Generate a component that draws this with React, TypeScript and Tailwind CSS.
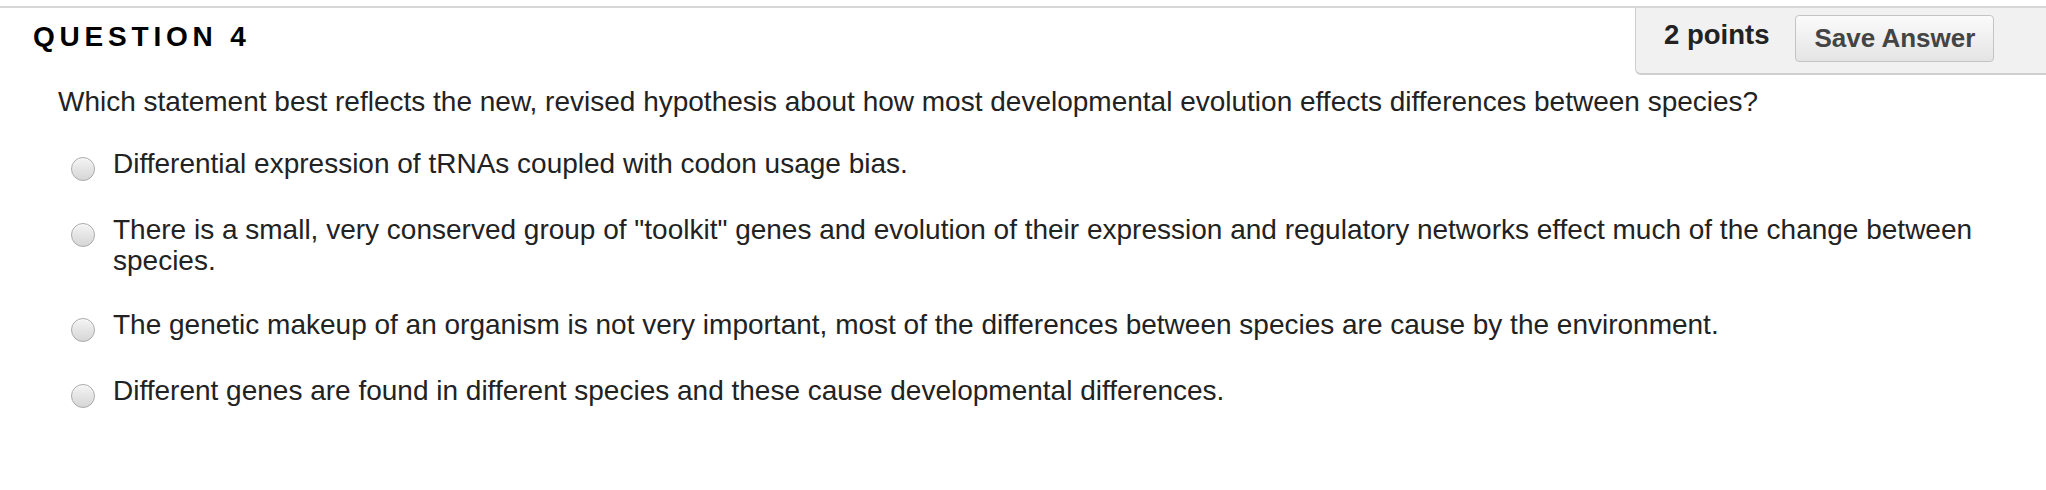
import React from "react";

const options = [
  "Differential expression of tRNAs coupled with codon usage bias.",
  'There is a small, very conserved group of "toolkit" genes and evolution of their expression and regulatory networks effect much of the change between species.',
  "The genetic makeup of an organism is not very important, most of the differences between species are cause by the environment.",
  "Different genes are found in different species and these cause developmental differences.",
];

function Radio() {
  return (
    <span className="mt-[9px] block h-[24px] w-[24px] shrink-0 rounded-full border border-[#a9a9a9] bg-gradient-to-b from-[#f4f4f4] to-[#d6d6d6] shadow-[inset_0_1px_1px_rgba(255,255,255,0.8)]" />
  );
}

export default function App() {
  return (
    <div
      className="h-[490px] w-full overflow-hidden bg-white pt-[6px] text-[#222]"
      style={{ fontFamily: '"Liberation Sans", Arial, sans-serif' }}
    >
      <div className="border-t-2 border-[#d6d6d6]">
        <div className="flex items-start">
          <h2 className="ml-[33px] mt-[13px] text-[28px] font-bold leading-[32px] tracking-[4.8px] text-black">
            QUESTION 4
          </h2>
          <div className="ml-auto flex h-[67px] w-[411px] items-start rounded-bl-[6px] border-b-2 border-l border-[#cfcfcf] bg-[#f1f1f1] pl-[28px] pt-[7px]">
            <span className="mt-[4px] text-[27.5px] font-bold leading-[31px] text-[#222]">
              2 points
            </span>
            <button className="ml-[26px] h-[47px] w-[199px] rounded-[4px] border border-[#c4c4c4] bg-gradient-to-b from-[#fbfbfb] to-[#e4e4e4] text-[26px] font-bold leading-[31px] text-[#444]">
              Save Answer
            </button>
          </div>
        </div>
        <p className="mt-[11px] pl-[58px] text-[28px] leading-[31px]">
          Which statement best reflects the new, revised hypothesis about how most developmental evolution effects differences between species?
        </p>
        <div className="mt-[31px] flex flex-col gap-[33px] pl-[71px] pr-[40px]">
          {options.map((o, i) => (
            <label key={i} className="flex items-start">
              <Radio />
              <span className="ml-[18px] text-[28px] leading-[31px]">{o}</span>
            </label>
          ))}
        </div>
      </div>
    </div>
  );
}
